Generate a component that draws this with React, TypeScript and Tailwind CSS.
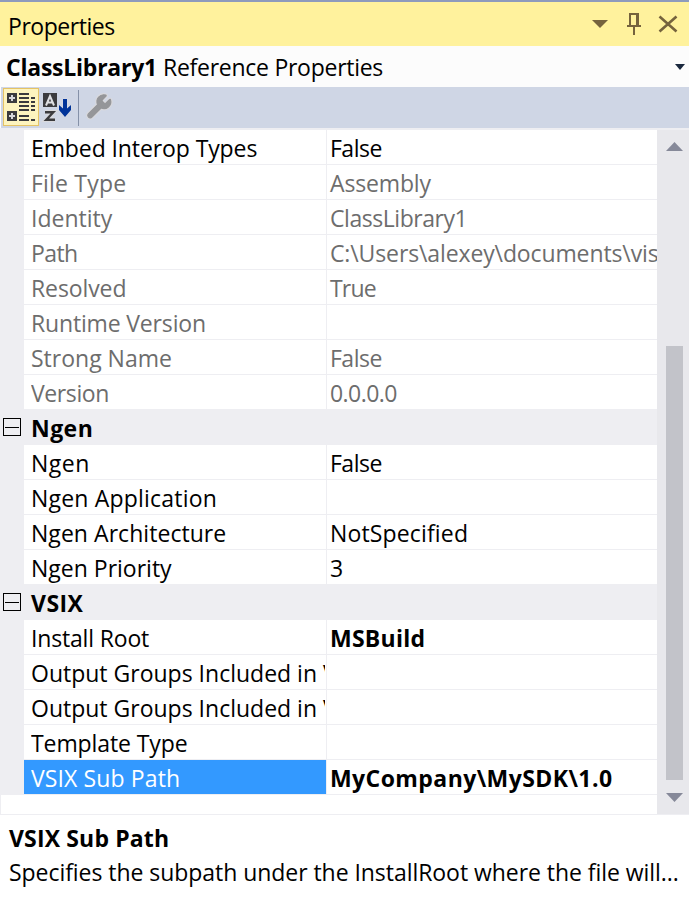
type Row = { n: string; v?: string; ns?: string; vs?: string; dim?: boolean; bold?: boolean; sel?: boolean };

const general: Row[] = [
  { n: "Embed Interop Types", v: "False", ns: "tracking-[-0.1px]", vs: "tracking-[-0.5px]" },
  { n: "File Type", v: "Assembly", ns: "tracking-[0.2px]", vs: "tracking-[-0.15px]", dim: true },
  { n: "Identity", v: "ClassLibrary1", vs: "tracking-[-0.45px]", dim: true },
  { n: "Path", v: "C:\\Users\\alexey\\documents\\vis", ns: "tracking-[-0.6px]", vs: "tracking-[-0.12px]", dim: true },
  { n: "Resolved", v: "True", ns: "tracking-[-0.1px]", vs: "tracking-[-0.8px]", dim: true },
  { n: "Runtime Version", ns: "tracking-[-0.16px]", dim: true },
  { n: "Strong Name", v: "False", vs: "tracking-[-0.5px]", dim: true },
  { n: "Version", v: "0.0.0.0", ns: "tracking-[-0.4px]", vs: "tracking-[-0.55px]", dim: true },
];
const ngen: Row[] = [
  { n: "Ngen", v: "False", ns: "tracking-[0.5px]", vs: "tracking-[-0.5px]" },
  { n: "Ngen Application", ns: "tracking-[0.2px]" },
  { n: "Ngen Architecture", v: "NotSpecified", ns: "tracking-[0.05px]", vs: "tracking-[0.15px]" },
  { n: "Ngen Priority", v: "3" },
];
const vsix: Row[] = [
  { n: "Install Root", v: "MSBuild", ns: "tracking-[-0.17px]", vs: "tracking-[0.25px]", bold: true },
  { n: "Output Groups Included in VSIX" },
  { n: "Output Groups Included in VSIX" },
  { n: "Template Type", ns: "tracking-[-0.1px]" },
  { n: "VSIX Sub Path", v: "MyCompany\\MySDK\\1.0", ns: "tracking-[0.12px]", vs: "tracking-[0.42px]", bold: true, sel: true },
];

function Rows({ rows }: { rows: Row[] }) {
  return (
    <>
      {rows.map((r, i) => (
        <div key={i} className={`ml-6 flex h-[35px] border-b border-[#eeeef2] bg-white leading-[37px] ${r.dim ? "text-[#6d6d6d]" : "text-black"}`}>
          <div className={`w-[302px] shrink-0 overflow-hidden whitespace-nowrap pl-[7px] ${r.sel ? "bg-[#3399ff] text-white" : ""}`}>
            <div className={`w-[294px] overflow-hidden ${r.ns ?? ""}`}>{r.n}</div>
          </div>
          <div className={`flex-1 overflow-hidden whitespace-nowrap border-l border-[#eeeef2] pl-[3px] ${r.bold ? "font-bold" : ""} ${r.vs ?? ""}`}>{r.v}</div>
        </div>
      ))}
    </>
  );
}

function Category({ name }: { name: string }) {
  return (
    <div className="flex h-[35px] bg-[#eeeef2] font-bold leading-[37px]">
      <svg className="ml-[3px] mt-[8px] h-[18px] w-[18px] shrink-0" viewBox="0 0 18 18" shapeRendering="crispEdges">
        <rect x=".5" y=".5" width="17" height="17" fill="none" stroke="#000" />
        <path d="M2 9.5h14" stroke="#000" />
      </svg>
      <span className="pl-[10px] tracking-[0.45px]">{name}</span>
    </div>
  );
}

const wrench =
  "M14.7 6.3a1 1 0 0 0 0 1.4l1.6 1.6a1 1 0 0 0 1.4 0l3.106-3.105c.32-.322.863-.22.983.218a6 6 0 0 1-8.259 7.057l-7.91 7.91a1 1 0 0 1-2.999-3l7.91-7.91a6 6 0 0 1 7.057-8.259c.438.12.54.662.219.984z";

export default function App() {
  return (
    <div className="flex h-[922px] w-[689px] flex-col overflow-hidden bg-white font-['Open_Sans','Noto_Sans',sans-serif] text-[23px] text-black">
      <div className="flex h-[46px] shrink-0 border-t-2 border-[#8e9bbc] bg-[#fff29d] pl-[8px] leading-[48px]">
        <span className="flex-1 tracking-[-0.45px]">Properties</span>
        <svg className="h-[44px] w-[105px]" viewBox="584 2 105 44" fill="none" stroke="#75633d">
          <path d="M592 20h16l-8 8z" fill="#75633d" stroke="none" />
          <path d="M629 13h10v12h2v2h-6v8h-2v-8h-6v-2h2zM631 15v10h5v-10z" fill="#75633d" fillRule="evenodd" stroke="none" />
          <path d="M659.500 16.500l17 15M676.500 16.500l-17 15" strokeWidth="2.600" />
        </svg>
      </div>
      <div className="flex h-[41px] shrink-0 items-center bg-[#fcfcfc] pl-[6px] leading-[41px]">
        <span className="pt-[2px] font-bold tracking-[-0.23px]">ClassLibrary1</span>
        <span className="flex-1 pl-[6px] pt-[2px] tracking-[-0.27px]">Reference Properties</span>
        <svg className="mr-[4px] h-[6px] w-[10px]" viewBox="0 0 10 6"><path d="M0 0h10L5 6z" fill="#1b293e" /></svg>
      </div>
      <div className="ml-px h-[41px] shrink-0 bg-[#cfd6e5]">
        <svg className="h-[41px] w-[120px]" viewBox="1 87 120 41">
          <rect x="3.500" y="88.500" width="35" height="37" fill="#fdf4bf" stroke="#e5c365" />
          <g shapeRendering="crispEdges">
            <path d="M7 93h10v10h-10zM7 111h10v10h-10z" fill="#3b3b3e" />
            <path d="M9 98h6M12 95v6M9 116h6M12 113v6" stroke="#d6d6da" strokeWidth="2" />
            <path d="M19 94h10M19 98h10M19 102h10M19 106h10M19 110h10M19 116h10M19 120h10M31 98h4M31 102h4M31 106h4M31 110h4M31 120h4" stroke="#3b3b3e" strokeWidth="2" />
            <path d="M78.500 90v36" stroke="#8591a8" />
          </g>
          <path d="M43 93h14v14h-14z" fill="#3b3b3e" />
          <path d="M46 105.500l4-9.500 4 9.500M47.500 102.500h5" stroke="#dfe0e3" strokeWidth="2" fill="none" />
          <path d="M45 112.200h8.300l-7 7.600h8.700" stroke="#d9d9dd" strokeWidth="4.500" fill="none" />
          <path d="M45 112.200h8.300l-7 7.600h8.700" stroke="#3b3b3e" strokeWidth="2.400" fill="none" />
          <path d="M63 99h4v9.500l4-3.500v5l-6 7-6-7v-5l4 3.500z" fill="#003399" stroke="#dcdde2" strokeWidth="1" paintOrder="stroke" />
          <g transform="translate(85.500 92.500) scale(1.150)" strokeLinejoin="round">
            <path d={wrench} fill="#d9d9dd" stroke="#d9d9dd" strokeWidth="3" />
            <path d={wrench} fill="#959699" stroke="#959699" strokeWidth="1" />
          </g>
        </svg>
      </div>
      <div className="h-[2px] shrink-0 bg-[#eeeef2]" />
      <div className="flex h-[685px] shrink-0 border-b border-[#eeeef2]">
        <div className="flex w-[657px] flex-col">
          <div className="h-[665px] bg-[#eeeef2]">
            <Rows rows={general} />
            <Category name="Ngen" />
            <Rows rows={ngen} />
            <Category name="VSIX" />
            <Rows rows={vsix} />
          </div>
          <div className="flex-1 border-l border-[#eeeef2]" />
        </div>
        <div className="flex w-8 flex-col bg-[#e8e8ec] pl-[9px]">
          <svg className="mt-[12px] h-[9px] w-[17px]" viewBox="0 0 17 9"><path d="M0 9h17L8.500 0z" fill="#868999" /></svg>
          <div className="mt-[195px] h-[434px] w-[17px] bg-[#c2c3c9]" />
          <svg className="mt-[13px] h-[9px] w-[17px]" viewBox="0 0 17 9"><path d="M0 0h17L8.500 9z" fill="#868999" /></svg>
        </div>
      </div>
      <div className="whitespace-nowrap pl-[9px] pt-[6px] leading-[34px]">
        <div className="font-bold tracking-[0.15px]">VSIX Sub Path</div>
        <div className="tracking-[-0.05px]">Specifies the subpath under the InstallRoot where the file will...</div>
      </div>
    </div>
  );
}
